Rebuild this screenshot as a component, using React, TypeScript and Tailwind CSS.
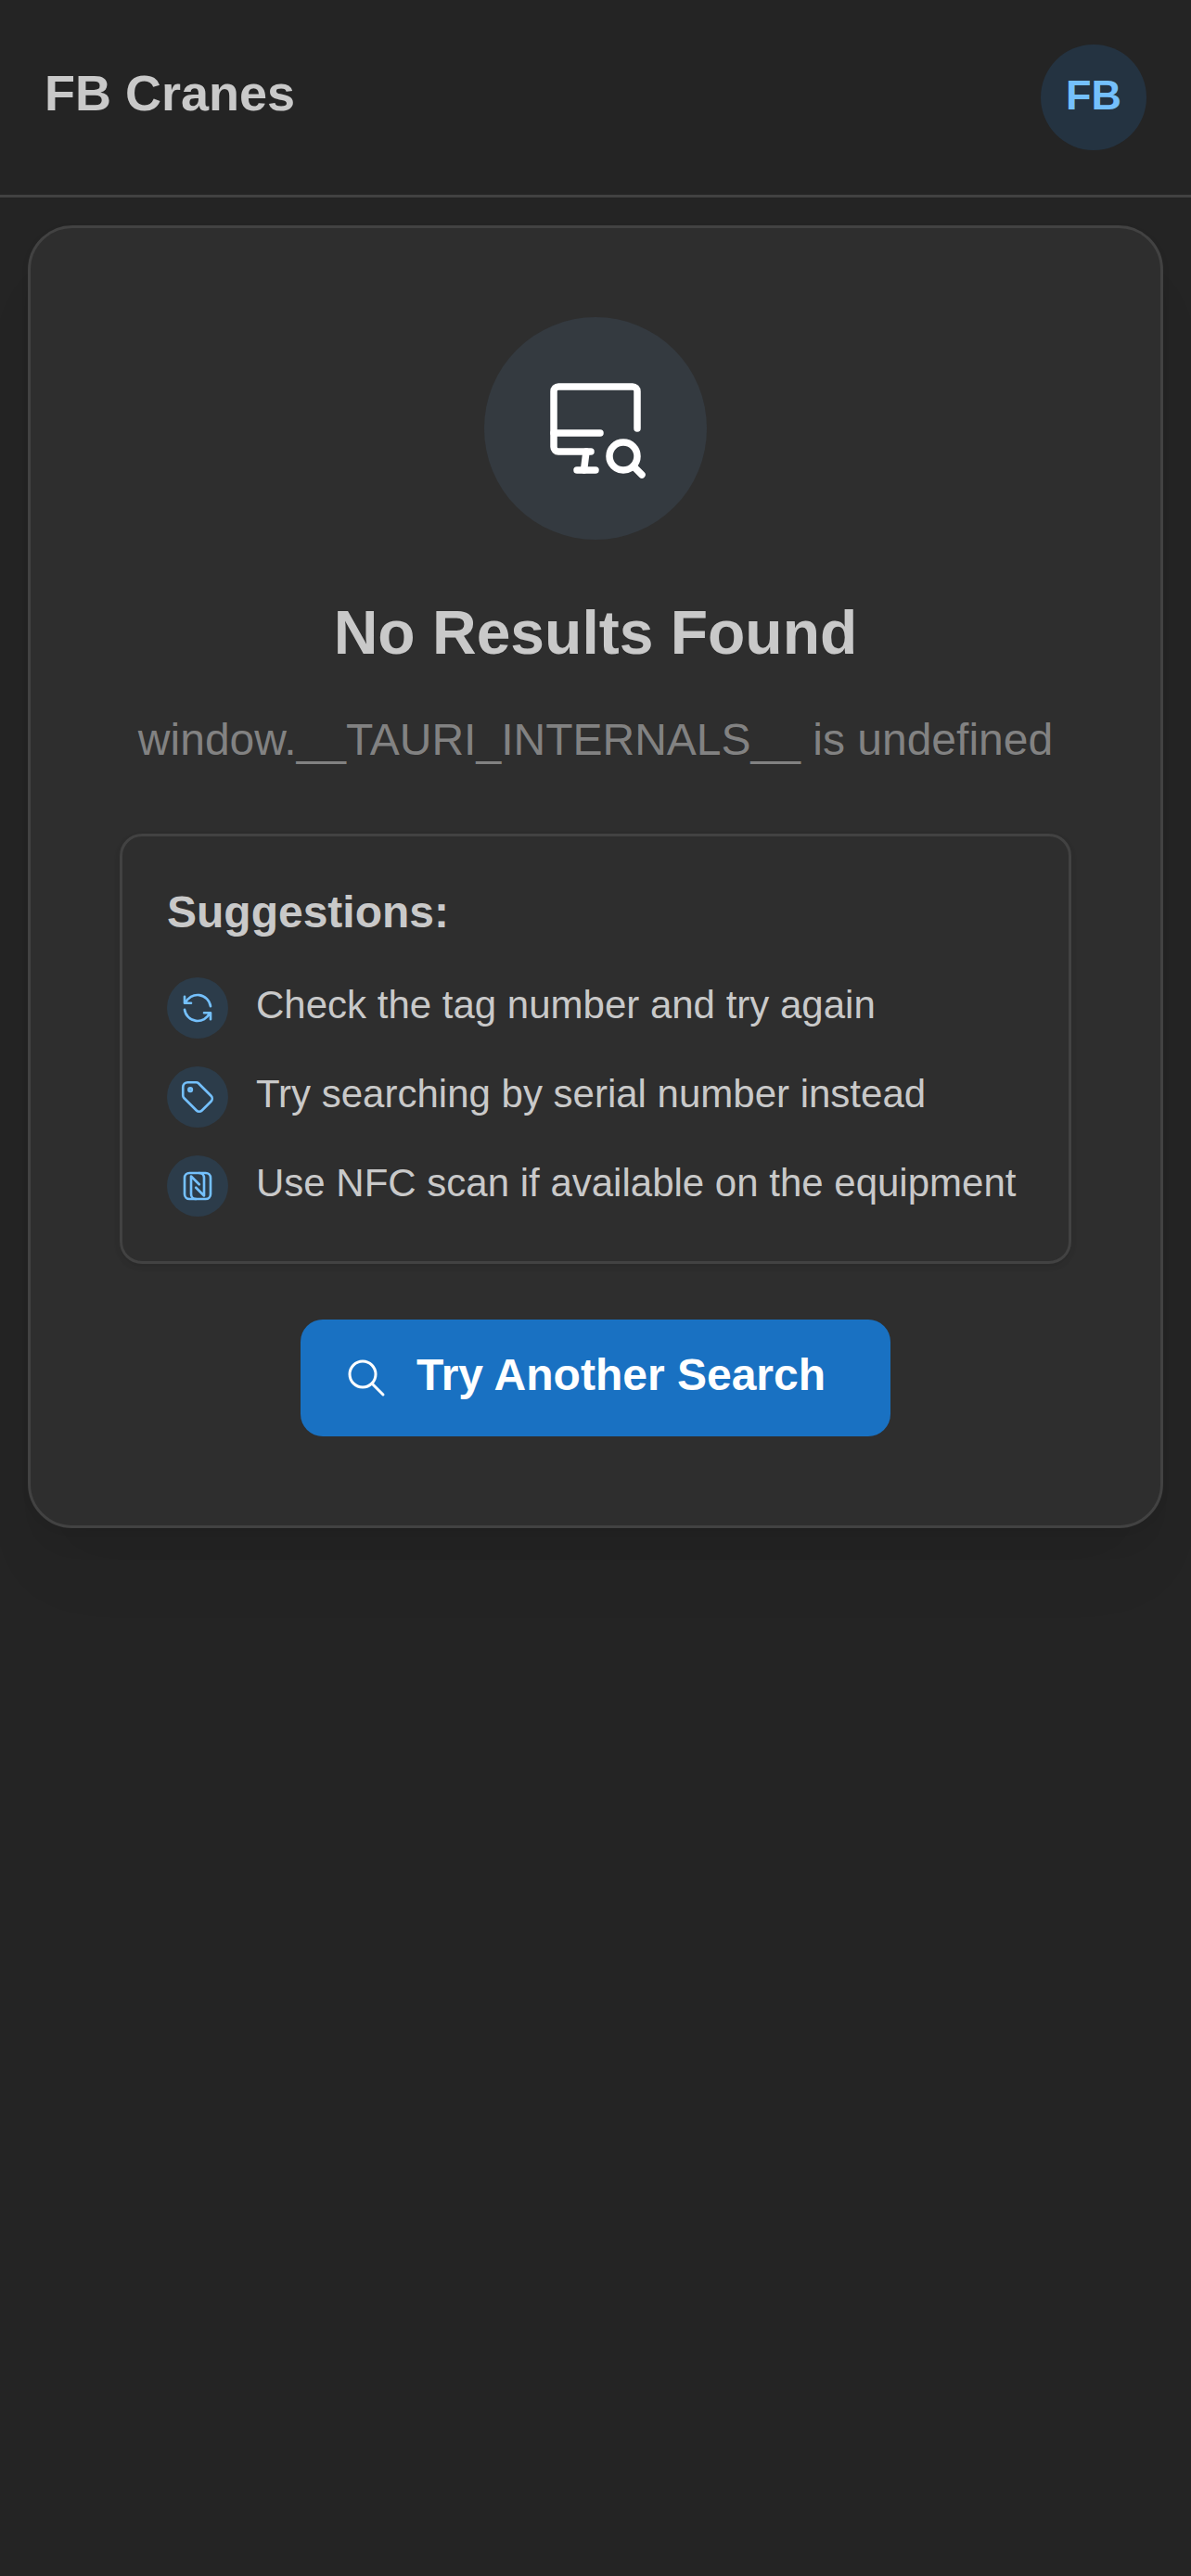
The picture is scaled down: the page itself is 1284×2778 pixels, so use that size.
import type { ReactNode } from "react";

function Icon({ size, children }: { size: string; children: ReactNode }) {
  return (
    <svg
      className={size}
      viewBox="0 0 24 24"
      fill="none"
      stroke="currentColor"
      strokeWidth="1.5"
      strokeLinecap="round"
      strokeLinejoin="round"
    >
      {children}
    </svg>
  );
}

const suggestions = [
  {
    text: "Check the tag number and try again",
    icon: (
      <>
        <path d="M20 11a8.1 8.1 0 0 0 -15.5 -2m-.5 -4v4h4" />
        <path d="M4 13a8.1 8.1 0 0 0 15.5 2m.5 4v-4h-4" />
      </>
    ),
  },
  {
    text: "Try searching by serial number instead",
    icon: (
      <>
        <path d="M6.5 7.5a1 1 0 1 0 2 0a1 1 0 1 0 -2 0" />
        <path d="M3 6v5.172a2 2 0 0 0 .586 1.414l7.71 7.71a2.41 2.41 0 0 0 3.408 0l5.592 -5.592a2.41 2.41 0 0 0 0 -3.408l-7.71 -7.71a2 2 0 0 0 -1.414 -.586h-5.172a3 3 0 0 0 -3 3z" />
      </>
    ),
  },
  {
    text: "Use NFC scan if available on the equipment",
    icon: (
      <>
        <path d="M11 20a3 3 0 0 1 -3 -3v-11l5 5" />
        <path d="M13 4a3 3 0 0 1 3 3v11l-5 -5" />
        <path d="M4 7a3 3 0 0 1 3 -3h10a3 3 0 0 1 3 3v10a3 3 0 0 1 -3 3h-10a3 3 0 0 1 -3 -3z" />
      </>
    ),
  },
];

export default function App() {
  return (
    <div className="min-h-screen bg-[#242424] font-['Liberation_Sans',Arial,sans-serif] text-[#c9c9c9]">
      <header className="flex h-[213px] items-start justify-between border-b-[3px] border-[#424242] px-12 pt-12">
        <h1 className="mt-[12px] text-[54px] leading-[80px] font-bold">FB Cranes</h1>
        <div className="flex size-[114px] items-center justify-center rounded-full bg-[#243341] pb-[5px] text-[45px] leading-none font-bold text-[#74c0fc]">
          FB
        </div>
      </header>

      <main className="px-[30px] pt-[30px]">
        <section className="flex h-[1405px] flex-col items-center rounded-[48px] border-[3px] border-[#424242] bg-[#2e2e2e] px-24 pt-24 shadow-[0_3px_9px_rgba(0,0,0,0.05),0_60px_75px_-15px_rgba(0,0,0,0.05),0_30px_30px_-15px_rgba(0,0,0,0.04)]">
          <div className="flex size-60 shrink-0 items-center justify-center rounded-full bg-[#343a40] text-white">
            <Icon size="size-[120px]">
              <path d="M11 17h-7a1 1 0 0 1 -1 -1v-12a1 1 0 0 1 1 -1h16a1 1 0 0 1 1 1v8" />
              <path d="M3 13h10" />
              <path d="M8 21h4" />
              <path d="M10 17l-.5 4" />
              <path d="M15 18a3 3 0 1 0 6 0a3 3 0 1 0 -6 0" />
              <path d="M20.2 20.2l1.8 1.8" />
            </Icon>
          </div>
          <h2 className="mt-[55px] text-[66px] leading-[90px] font-bold whitespace-nowrap">No Results Found</h2>
          <p className="mt-[33px] text-[48px] leading-[75px] whitespace-nowrap text-[#828282]">
            window.__TAURI_INTERNALS__ is undefined
          </p>

          <div className="mt-[64px] h-[464px] w-full rounded-3xl border-[3px] border-[#424242] bg-[#2e2e2e] px-12 pt-12 shadow-[0_3px_9px_rgba(0,0,0,0.05),0_3px_6px_rgba(0,0,0,0.05)]">
            <h3 className="text-[48px] leading-[67px] font-bold">Suggestions:</h3>
            <ul className="mt-[37px] flex flex-col gap-[30px]">
              {suggestions.map(({ text, icon }) => (
                <li key={text} className="flex h-[66px] items-center gap-[30px]">
                  <span className="flex size-[66px] shrink-0 items-center justify-center rounded-full bg-[#2c3c4a] text-[#74c0fc]">
                    <Icon size="size-[42px]">{icon}</Icon>
                  </span>
                  <span className="pb-[7px] text-[42px] leading-[59px] whitespace-nowrap">{text}</span>
                </li>
              ))}
            </ul>
          </div>

          <button className="mt-[60px] flex h-[126px] w-[636px] items-center gap-[30px] rounded-3xl bg-[#1971c2] pl-[47px] text-[48px] font-bold text-white">
            <Icon size="size-12">
              <path d="M3 10a7 7 0 1 0 14 0a7 7 0 1 0 -14 0" />
              <path d="M21 21l-6 -6" />
            </Icon>
            <span className="pb-[7px] leading-[70px] whitespace-nowrap">Try Another Search</span>
          </button>
        </section>
      </main>
    </div>
  );
}
